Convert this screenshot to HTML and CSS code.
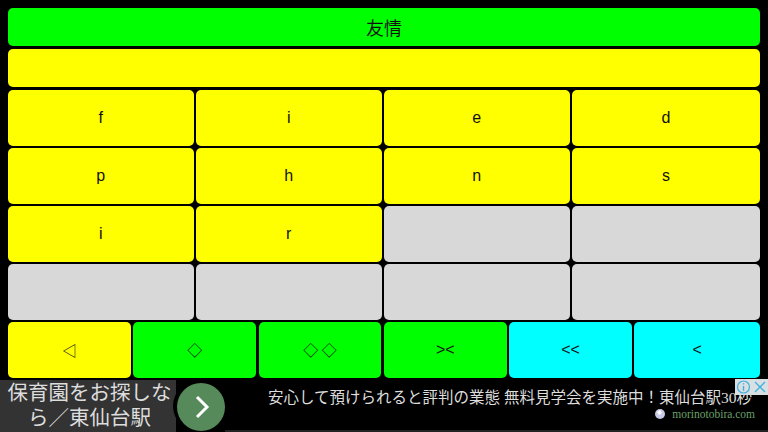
FILE: index.html
```html
<!DOCTYPE html>
<html lang="ja">
<head>
    <meta charset="UTF-8">
    <title>友情</title>
    <link rel="stylesheet" href="styles.css">
</head>
<body>

<div class="board">
    <div class="key title green">友情</div>
    <div class="key answer yellow"></div>

    <div class="letters">
        <div class="key yellow">f</div>
        <div class="key yellow">i</div>
        <div class="key yellow">e</div>
        <div class="key yellow">d</div>
        <div class="key yellow">p</div>
        <div class="key yellow">h</div>
        <div class="key yellow">n</div>
        <div class="key yellow">s</div>
        <div class="key yellow">i</div>
        <div class="key yellow">r</div>
        <div class="key gray"></div>
        <div class="key gray"></div>
        <div class="key gray"></div>
        <div class="key gray"></div>
        <div class="key gray"></div>
        <div class="key gray"></div>
    </div>

    <div class="controls">
        <div class="key yellow symbol">◁</div>
        <div class="key green symbol">◇</div>
        <div class="key green symbol double">◇◇</div>
        <div class="key green">&gt;&lt;</div>
        <div class="key cyan">&lt;&lt;</div>
        <div class="key cyan">&lt;</div>
    </div>
</div>

<div class="ad">
    <div class="ad-left">保育園をお探しなら／東仙台駅</div>
    <div class="ad-go">
        <svg width="48" height="48" viewBox="0 0 48 48">
            <circle cx="24" cy="24" r="24" fill="#568a5a"/>
            <path d="M20 14 L30 24 L20 34" fill="none" stroke="#fff" stroke-width="3"/>
        </svg>
    </div>
    <div class="ad-body">
        <div class="ad-text">安心して預けられると評判の業態 無料見学会を実施中！東仙台駅30秒</div>
        <div class="ad-site">
            <svg width="12" height="12" viewBox="0 0 12 12">
                <circle cx="6" cy="6" r="5" fill="#c8c8e8"/>
                <path d="M3 4 L6 2 L8 5 L5 7 Z" fill="#fff"/>
            </svg>
            <span>morinotobira.com</span>
        </div>
    </div>
    <div class="ad-badges">
        <svg class="badge" width="17" height="16" viewBox="0 0 17 16">
            <circle cx="8.5" cy="8" r="6" fill="none" stroke="#3fb0dc" stroke-width="1.2"/>
            <path d="M8.5 4.2 V5.6 M8.5 7 V11.8" stroke="#3fb0dc" stroke-width="1.4"/>
        </svg>
        <svg class="badge" width="16" height="16" viewBox="0 0 16 16">
            <path d="M3 3 L13 13 M13 3 L3 13" stroke="#3fb0dc" stroke-width="1.3"/>
        </svg>
    </div>
</div>

</body>
</html>
```

FILE: styles.css
```css
html, body {
    margin: 0;
    padding: 0;
}
body {
    width: 768px;
    height: 432px;
    overflow: hidden;
    background-color: #000;
    font-family: "Liberation Sans", "Noto Sans CJK JP", sans-serif;
    color: #111;
}
.board {
    height: 380px;
    padding: 8px 8px 0;
    box-sizing: border-box;
    display: flex;
    flex-direction: column;
    gap: 2.4px;
}
.key {
    display: flex;
    align-items: center;
    justify-content: center;
    border-radius: 5px;
    font-size: 16px;
}
.title {
    height: 38.2px;
    flex: none;
    font-size: 18px;
}
.answer {
    height: 38.6px;
    flex: none;
}
.symbol {
    font-family: "Noto Sans CJK JP", sans-serif;
    font-size: 15px;
}
.double {
    padding-left: 3.5px;
    letter-spacing: 3.5px;
}
.yellow {
    background-color: #ff0;
}
.green {
    background-color: #0f0;
}
.cyan {
    background-color: #0ff;
}
.gray {
    background-color: #d8d8d8;
}
.letters {
    height: 230px;
    flex: none;
    display: grid;
    grid-template-columns: repeat(3, 185.6px) 1fr;
    grid-template-rows: repeat(4, 56px);
    gap: 2px 2.4px;
}
.controls {
    height: 56px;
    flex: none;
    display: grid;
    grid-template-columns: repeat(5, 122.8px) 1fr;
    gap: 2.5px;
}
.ad {
    position: relative;
    height: 52px;
    display: flex;
    background-color: #000;
    font-family: "Liberation Serif", "Noto Sans CJK JP", serif;
    color: #ddd;
}
.ad-left {
    width: 176px;
    flex: none;
    padding: 1px 3px 0 6px;
    box-sizing: border-box;
    background-color: #333;
    font-size: 20.5px;
    line-height: 25px;
    text-align: center;
}
.ad-go {
    width: 52px;
    flex: none;
    margin-left: -3px;
    padding: 3px 0 0 4px;
    box-sizing: border-box;
    border-radius: 26px 0 0 26px;
    background-color: #000;
}
.ad-body {
    flex: 1;
    padding: 8px 13px 0 43px;
    border-bottom: 2px solid #222;
    white-space: nowrap;
    overflow: hidden;
}
.ad-text {
    font-size: 15.5px;
    line-height: 20px;
}
.ad-site {
    display: flex;
    justify-content: flex-end;
    align-items: center;
    gap: 6px;
    font-size: 11.5px;
    color: #6aa06a;
}
.ad-badges {
    position: absolute;
    top: -1px;
    right: 0;
    display: flex;
}
.badge {
    background-color: #d8e0e4;
}
```
